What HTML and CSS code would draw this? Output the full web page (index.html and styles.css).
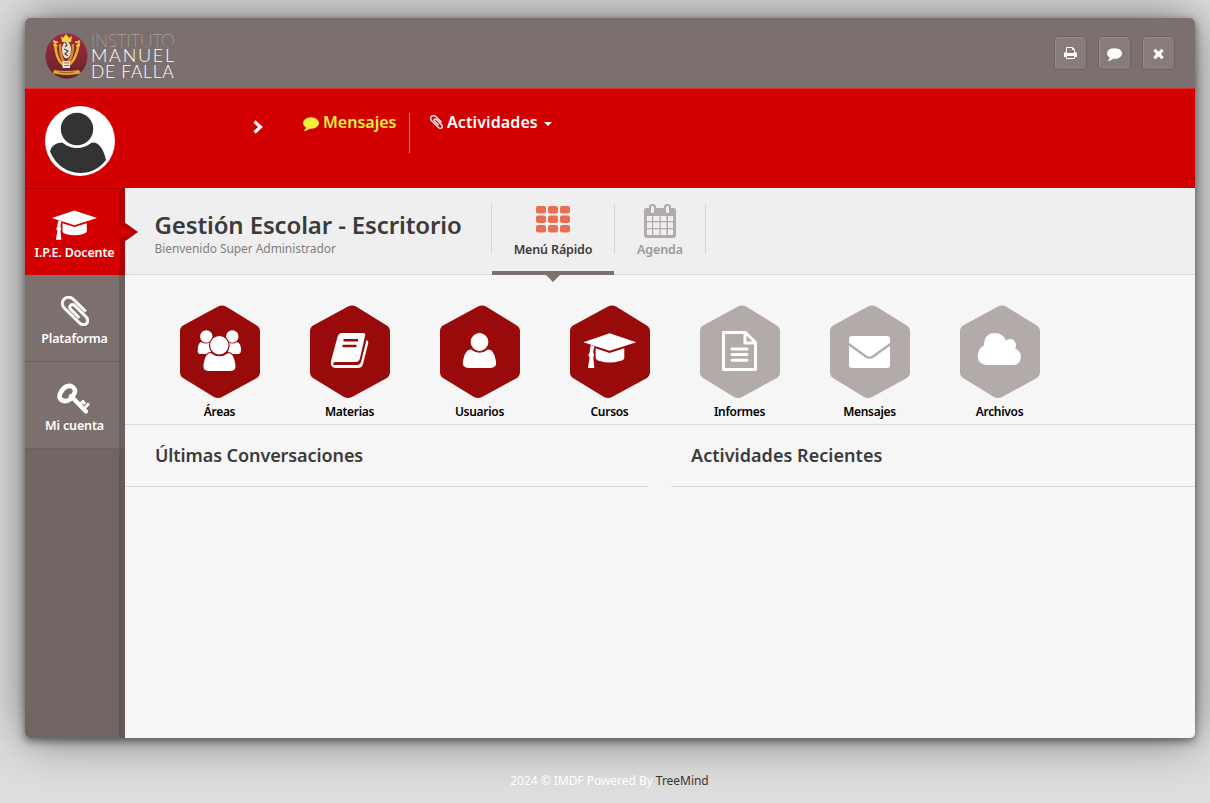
FILE: index.html
```html
<!DOCTYPE html>
<html lang="es">
<head>
<meta charset="utf-8">
<title>Gestión Escolar - Escritorio</title>
<link rel="stylesheet" href="styles.css">
</head>
<body>
<svg class="defs" width="0" height="0" aria-hidden="true">
  <symbol id="comment" viewBox="0 0 1792 1792"><path d="M1792 896q0 174-120 321.500t-326 233-450 85.500q-70 0-145-8-198 175-460 242-49 14-114 22-17 2-30.500-9t-17.500-29v-1q-3-4-.5-12t2-10 4.500-9.500l6-9 7-8.500 8-9q7-8 31-34.500t34.500-38 31-39.500 32.500-51 27-59 26-76q-157-89-247.500-220t-90.500-281q0-174 120-321.500t326-233 450-85.500 450 85.500 326 233 120 321.500z"/></symbol>
  <symbol id="clip" viewBox="196 131 1400 1530" preserveAspectRatio="none"><path d="M1596 1385q0 117-79 196t-196 79q-135 0-235-100l-777-776q-113-115-113-271 0-159 110-270t269-111q158 0 273 113l605 606q10 10 10 22 0 16-30.500 46.500t-46.500 30.500q-13 0-23-10l-606-607q-79-77-181-77-106 0-179 75t-73 181q0 105 76 181l776 777q63 63 145 63 64 0 106-42t42-106q0-82-63-145l-581-581q-26-24-60-24-29 0-48 19t-19 48q0 32 25 59l410 410q10 10 10 22 0 16-31 47t-47 31q-12 0-22-10l-410-410q-63-61-63-149 0-82 57-139t139-57q88 0 149 63l581 581q100 98 100 235z"/></symbol>
  <symbol id="cap" viewBox="459 114 159 105"><path d="M459 142L538 115L618 142L538 167Z"/><path d="M496 160L538 174L582 160V188Q582 195 569 198Q538 207 508 198Q496 195 496 188Z"/><path d="M482 150L493 154Q489 163 489 173Q494 180 489 187L492 219H473L478 187Q471 180 478 173Q478 162 482 150Z"/></symbol>
  <symbol id="hex" viewBox="0 0 80 93"><path d="M38 1.500Q42-.5 46 1.500L76 20Q80 22.500 80 26V67Q80 71 76 73.500L42 92Q38 94 34 92L3 73Q0 71 0 67V26Q0 22.500 3 20.500Z"/></symbol>
</svg>

<div class="window">
  <header class="topbar">
    <div class="brand">
      <svg width="43" height="48" viewBox="0 0 43 48">
        <defs><linearGradient id="seal" x1="0" y1="0" x2="0" y2="1"><stop offset="0" stop-color="#a52b3a"/><stop offset="1" stop-color="#63242b"/></linearGradient></defs>
        <ellipse cx="21.500" cy="24" rx="21" ry="22.800" fill="url(#seal)"/>
        <path d="M10 10Q11 31 21 34Q31 31 34 10" fill="none" stroke="#e6b030" stroke-width="2.600"/>
        <path d="M15 12Q15 28 21 31Q28 28 28 12" fill="none" stroke="#d98a24" stroke-width="2.400"/>
        <path d="M8 9l5 1.500M30 10.500l5-1.500M8.500 13l4 1M31 14l4-1" stroke="#f4cd3a" stroke-width="1.600"/>
        <path d="M16 4l2 2 3-4 3 4 3-2-1 6h-9z" fill="#f2d536"/>
        <ellipse cx="21.500" cy="18" rx="4.500" ry="8.500" fill="#e8e3d8"/>
        <path d="M20 10l2 3-2 2M19 17l4 2-3 3 3 2" fill="none" stroke="#4b4540" stroke-width="1.200"/>
        <path d="M17.500 29h7.500v7h-7.500z" fill="#eee2df"/><path d="M19 31h5M19 33.500h5" stroke="#b76367"/>
        <path d="M9 38q12 2 25 0l2 3.500-4 .5q-10 2-20 0l-4-.5z" fill="#dfa52c"/><path d="M14 40q7 1.500 15 0" fill="none" stroke="#914d20" stroke-width=".8"/>
      </svg>
      <div class="brand-text"><span class="thin">INSTITUTO</span><span class="mid">MANUEL</span><span class="low">DE FALLA</span></div>
    </div>
    <nav class="tools">
      <a class="tool"><svg width="13" height="14" viewBox="64 0 1664 1792"><path d="M448 1536h896v-256h-896v256zm0-640h896v-384h-160q-40 0-68-28t-28-68v-160h-640v640zm1280 64v416q0 13-9.500 22.500t-22.500 9.500h-224v160q0 40-28 68t-68 28h-960q-40 0-68-28t-28-68v-160h-224q-13 0-22.500-9.500t-9.500-22.500v-416q0-79 56.500-135.500t135.500-56.500h64v-544q0-40 28-68t68-28h672q40 0 88 20t76 48l152 152q28 28 48 76t20 88v256h64q79 0 135.500 56.500t56.500 135.500z"/></svg></a>
      <a class="tool"><svg width="15" height="15"><use href="#comment"/></svg></a>
      <a class="tool"><svg width="15" height="15" viewBox="0 0 1792 1792"><path d="M1490 1322q0 40-28 68l-136 136q-28 28-68 28t-68-28l-294-294-294 294q-28 28-68 28t-68-28l-136-136q-28-28-28-68t28-68l294-294-294-294q-28-28-28-68t28-68l136-136q28-28 68-28t68 28l294 294 294-294q28-28 68-28t68 28l136 136q28 28 28 68t-28 68l-294 294 294 294q28 28 28 68z"/></svg></a>
    </nav>
  </header>

  <section class="profile">
    <svg class="avatar" width="70" height="70" viewBox="0 0 70 70"><circle cx="35" cy="35" r="35" fill="#fff"/><circle cx="32" cy="23" r="16.200" fill="#333"/><path d="M5 45.500Q7 37 17 36.500Q32 47.500 47 36.500Q57 36 61 54Q51 67 35 67Q14 66 5 45.500Z" fill="#333"/></svg>
    <svg class="chevron" width="10" height="14" viewBox="0 0 10 14"><path d="M1.500 1.500L7.500 7L1.500 12.500"/></svg>
    <nav class="links">
      <a class="link active"><svg width="16" height="16"><use href="#comment"/></svg><span>Mensajes</span></a>
      <a class="link"><svg class="bold-clip" width="13" height="14"><use href="#clip"/></svg><span>Actividades</span><i class="caret"></i></a>
    </nav>
  </section>

  <div class="body">
    <aside class="sidebar">
      <a class="side current"><svg width="45" height="30"><use href="#cap"/></svg><span>I.P.E. Docente</span></a>
      <a class="side"><svg class="bold-clip" width="28" height="30"><use href="#clip"/></svg><span>Plataforma</span></a>
      <a class="side"><svg class="key" width="33" height="32" viewBox="0 0 33 32"><g fill="none" stroke="#fff"><path d="M4 9Q8 2 14 3Q20 6 17 11Q13 19 7 18Q0 16 4 9Z" stroke-width="4.600"/><path d="M14 13L29 28.500" stroke-width="4.400" stroke-linecap="round"/><path d="M22 22L27 17.500M26.500 26L32 20.500M25.500 18L28 21" stroke-width="3"/></g></svg><span>Mi cuenta</span></a>
    </aside>

    <main class="content">
      <div class="heading">
        <div class="titles"><h1>Gestión Escolar - Escritorio</h1><p>Bienvenido Super Administrador</p></div>
        <div class="tabs">
          <a class="tab selected"><svg class="grid" width="34" height="27" viewBox="0 0 34 27"><rect width="10" height="7.500" rx="2"/><rect x="12" width="10" height="7.500" rx="2"/><rect x="24" width="10" height="7.500" rx="2"/><rect y="9.500" width="10" height="7.500" rx="2"/><rect x="12" y="9.500" width="10" height="7.500" rx="2"/><rect x="24" y="9.500" width="10" height="7.500" rx="2"/><rect y="19" width="10" height="7.500" rx="2"/><rect x="12" y="19" width="10" height="7.500" rx="2"/><rect x="24" y="19" width="10" height="7.500" rx="2"/></svg><span>Menú Rápido</span></a>
          <a class="tab"><svg width="32" height="34" viewBox="0 0 32 34"><path fill="#b3abaa" d="M2.500 4H5V3Q5 0 8.500 0T12 3V4H20V3Q20 0 23.500 0T27 3V4H29.500Q32 4 32 6.500V31Q32 34 29 34H3Q0 34 0 31V6.500Q0 4 2.500 4Z"/><path fill="#efefef" d="M7 3Q7 2 8.500 2T10 3V8Q10 9 8.500 9T7 8ZM22 3Q22 2 23.500 2T25 3V8Q25 9 23.500 9T22 8ZM3 12H8V17H3ZM9.300 12H15.500V17H9.300ZM16.700 12H22.500V17H16.700ZM24 12H29V17H24ZM3 18.300H8V24H3ZM9.300 18.300H15.500V24H9.300ZM16.700 18.300H22.500V24H16.700ZM24 18.300H29V24H24ZM3 25.300H8V31H3ZM9.300 25.300H15.500V31H9.300ZM16.700 25.300H22.500V31H16.700ZM24 25.300H29V31H24Z"/></svg><span>Agenda</span></a>
        </div>
      </div>

      <div class="shortcuts">
        <a class="shortcut"><svg width="80" height="93" viewBox="0 0 80 93"><use href="#hex"/><g fill="#fff"><circle cx="26.300" cy="31.500" r="6.200"/><circle cx="52.300" cy="31.500" r="6.200"/><path d="M21 37Q26 40 31 37Q29 44 32 49H20Q17.500 49 17.700 45Q18 38 21 37ZM57 37Q52 40 48 37Q50 44 47 49H58Q61 49 61 45Q61 38 57 37Z"/><path class="group-body" d="M31 47.500Q39.500 54 48 47.500Q54 47 55.900 59Q57.500 66.500 50 66.500H29Q21.500 66.500 23 59Q25 47 31 47.500Z"/><circle class="ring" cx="39.300" cy="40.300" r="9.800"/></g></svg><span>Áreas</span></a>
        <a class="shortcut"><svg width="80" height="93" viewBox="0 0 80 93"><use href="#hex"/><path fill="#fff" d="M31.500 28H53Q56 28 55 31L50 53Q49 57 46 57H25Q22.500 58 23.500 60H47Q50 60 51 57L56.500 35Q59 36 58 39L53 59Q52 63 48 63H25Q20 62 21 56L27.500 32Q29 28 31.500 28Z"/><path d="M33.500 35.200H48M32.500 41H46.500" stroke="#990b0b" stroke-width="2.500"/></svg><span>Materias</span></a>
        <a class="shortcut"><svg width="80" height="93" viewBox="0 0 80 93"><use href="#hex"/><g fill="#fff"><path d="M31 44.500Q39.500 51 48 44.500Q54 44 55.900 56Q57.500 63 50 63H29Q21.500 63 23 56Q25 44 31 44.500Z"/><circle class="ring" cx="39.500" cy="37" r="9.500"/></g></svg><span>Usuarios</span></a>
        <a class="shortcut"><svg width="80" height="93" viewBox="0 0 80 93"><use href="#hex"/><use href="#cap" class="white" x="13.300" y="28" width="53" height="35"/></svg><span>Cursos</span></a>
        <a class="shortcut muted"><svg width="80" height="93" viewBox="0 0 80 93"><use href="#hex"/><path d="M23.500 27.500H45.500L55.500 37.500V64.500H23.500ZM45 27.500V38H55.500M32 44H47M32 49.500H47M32 55.200H47" fill="none" stroke="#fff" stroke-width="3" stroke-linecap="round" stroke-linejoin="round"/></svg><span>Informes</span></a>
        <a class="shortcut muted"><svg width="80" height="93" viewBox="0 0 80 93"><use href="#hex"/><rect x="19" y="31" width="41" height="32" rx="3" fill="#fff"/><path d="M18.500 39L36 51.500Q39.500 54 43 51.500L60.500 39" fill="none" stroke="#b3abaa" stroke-width="2.200"/></svg><span>Mensajes</span></a>
        <a class="shortcut muted"><svg width="80" height="93" viewBox="0 0 80 93"><use href="#hex"/><path fill="#fff" d="M26 60Q18 59 17.800 51Q18 43 24 40.500Q24 28 35 28Q43 28 46 35.500Q52 32 55 37Q57 40 55 43.500Q61 46 61 52Q60 60 53 60Z"/></svg><span>Archivos</span></a>
      </div>

      <div class="panels">
        <section class="panel"><h2>Últimas Conversaciones</h2></section>
        <section class="panel recent"><h2>Actividades Recientes</h2></section>
      </div>
    </main>
  </div>
</div>
<footer class="footer">2024 © IMDF Powered By <a>TreeMind</a></footer>
</body>
</html>
```
FILE: styles.css
```css
* { box-sizing: border-box; }
body { margin: 0; height: 803px; overflow: hidden; background: #dedede; font: 13px "Noto Sans", sans-serif; color: #3b3b3b; }
svg { display: block; fill: currentColor; flex: none; }
.defs { position: absolute; }
.window { width: 1170px; height: 720px; margin: 18px 0 0 25px; border-radius: 5px; background: #f6f6f6; box-shadow: 0 0 50px rgba(0,0,0,.5), 0 3px 8px rgba(0,0,0,.5); display: flex; flex-direction: column; }
.topbar { height: 70px; flex: none; background: #7b706d; border-radius: 5px 5px 0 0; display: flex; justify-content: space-between; padding: 14px 20px 0 20px; }
.brand { display: flex; gap: 3px; color: #fff; }
.brand-text { display: flex; flex-direction: column; font: 300 17.500px/15.300px Lato, sans-serif; padding-top: 1px; white-space: nowrap; }
.thin { font-weight: 100; letter-spacing: -.3px; opacity: .9; }
.mid { font-size: 18px; letter-spacing: 1.750px; }
.low { letter-spacing: .7px; }
.tools { display: flex; gap: 10.500px; padding-top: 4px; }
.tool { width: 33.500px; height: 34px; border: 1px solid #6e6461; border-radius: 4px; background: #877c79; box-shadow: inset 1px 1px 0 #948a87; color: #fff; display: flex; align-items: center; justify-content: center; }
.profile { height: 100px; flex: none; background: #d20000; border-top: 1px solid #d7342f; display: flex; align-items: flex-start; color: #fff; }
.avatar { margin: 17px 0 0 20px; }
.chevron { margin: 31px 0 0 138px; fill: none; stroke: #fff; stroke-width: 3.200; }
.links { display: flex; padding: 24px 0 0 40px; }
.link { display: flex; align-items: flex-start; height: 40px; font-size: 16px; font-weight: 600; line-height: 18px; }
.link svg { margin: 2px 4px 0 0; }
.link.active { color: #f4ef3c; width: 107px; border-right: 1px solid #df8584; }
.link + .link { padding-left: 20px; letter-spacing: .1px; }
.bold-clip { stroke: currentColor; stroke-width: 30; overflow: visible; }
.caret { border: 4px solid transparent; border-top-color: #fff; margin: 9px 0 0 6px; }
.body { display: flex; flex: 1; }
.sidebar { width: 100px; background: linear-gradient(90deg, #716664 94px, #645957 94px); border-bottom-left-radius: 5px; }
.side { position: relative; height: 87px; display: flex; flex-direction: column; align-items: center; padding-right: 1px; color: #fff; font-size: 12.500px; font-weight: 600; letter-spacing: -.15px; background: linear-gradient(90deg, #7b706d 94px, #6b605e 94px); border-bottom: 1px solid #6b605e; }
.side svg { margin-top: 20.500px; }
.side .key { margin-right: 2px; }
.side span { line-height: 18px; margin-top: auto; margin-bottom: 13px; white-space: nowrap; }
.side.current { background: linear-gradient(90deg, #d20000 94px, #b30000 94px); border-top: 1px solid #ad0000; border-bottom: 0; }
.side.current::after { content: ""; position: absolute; left: 93px; top: 33px; width: 20px; height: 20px; background: #b30000; clip-path: polygon(30% 0, 100% 50%, 30% 100%); }
.side.current::before { content: ""; position: absolute; z-index: 1; left: 94px; top: 35px; width: 12px; height: 16px; background: #d20000; clip-path: polygon(0 0, 100% 50%, 0 100%); }
.content { flex: 1; min-width: 0; }
.heading { height: 87px; background: #efefef; border-bottom: 1px solid #dadada; display: flex; }
.titles { width: 366px; padding: 20px 0 0 29.500px; white-space: nowrap; }
h1 { margin: 0; font-size: 24px; line-height: 34px; font-weight: 600; letter-spacing: -.13px; }
.titles p { margin: 0; font-size: 12px; line-height: 14px; letter-spacing: -.07px; color: #808080; }
.tabs { display: flex; }
.tab { position: relative; height: 87px; width: 91px; display: flex; flex-direction: column; align-items: center; font-size: 12.500px; font-weight: 600; letter-spacing: -.15px; color: #999; padding: 16px 1px 0 0; }
.tab::before { content: ""; position: absolute; right: 0; top: 16px; height: 50px; border-right: 1px solid #d5d5d5; }
.tab.selected { width: 124px; color: #3b3b3b; padding: 18px 0 0; background: linear-gradient(#7b706d, #7b706d) 1px 83px / 122px 4px no-repeat, linear-gradient(#d5d5d5, #d5d5d5) 0 16px / 1px 50px no-repeat; }
.tab.selected::after { content: ""; position: absolute; top: 87px; left: 55px; border: 7px solid transparent; border-top-color: #7b706d; border-bottom: 0; }
.grid { fill: #e96f54; }
.tab span { line-height: 16px; margin-top: auto; margin-bottom: 17px; }
.shortcuts { height: 150px; padding: 30px 0 0 55px; display: flex; gap: 50px; border-bottom: 1px solid #dadada; }
.shortcut { width: 80px; display: flex; flex-direction: column; align-items: center; color: #990b0b; }
.shortcut.muted { color: #b3abaa; }
.shortcut span { font-size: 12px; font-weight: 600; line-height: 16px; margin: 6px 1px 0 0; letter-spacing: -.3px; color: #000; }
.white { fill: #fff; }
.ring, .group-body { stroke: #990b0b; stroke-width: 1.200; }
.panels { display: grid; grid-template-columns: 523px 524px; gap: 23px; }
.panel { height: 62px; border-bottom: 1px solid #dadada; padding-left: 30px; }
.panel.recent { padding-left: 20px; }
h2 { margin: 0; font-size: 18px; font-weight: 600; line-height: 61px; letter-spacing: -.09px; }
.recent h2 { letter-spacing: .04px; }
.footer { text-align: center; padding: 35px 0 0 9px; font-size: 12px; line-height: 16px; letter-spacing: -.03px; color: #fff; }
.footer a { color: #432f2f; }
```
